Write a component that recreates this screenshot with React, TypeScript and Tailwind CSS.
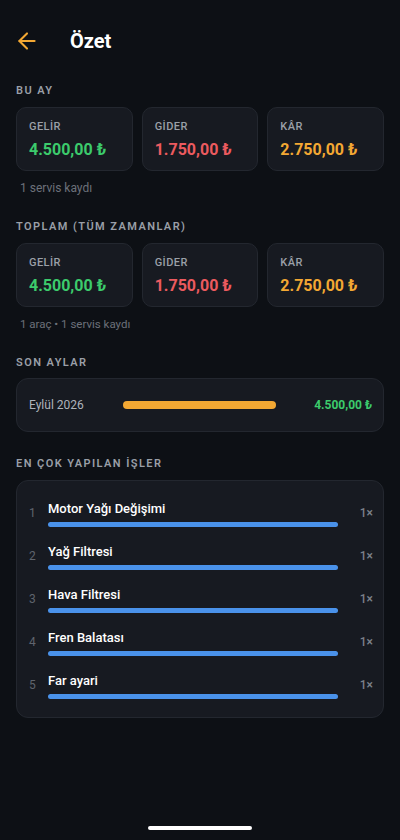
import { ArrowLeft } from 'lucide-react'

type Stat = { label: string; value: string; color: string }

const monthStats: Stat[] = [
  { label: 'GELİR', value: '4.500,00 ₺', color: 'text-[#3ccb6c]' },
  { label: 'GİDER', value: '1.750,00 ₺', color: 'text-[#ec5a5f]' },
  { label: 'KÂR', value: '2.750,00 ₺', color: 'text-[#f3a833]' },
]

const topJobs = ['Motor Yağı Değişimi', 'Yağ Filtresi', 'Hava Filtresi', 'Fren Balatası', 'Far ayari']

function SectionLabel({ children, className = '' }: { children: React.ReactNode; className?: string }) {
  return (
    <div className={`text-[11px] leading-4 font-semibold tracking-[0.13em] text-[#9a9fa7] ${className}`}>
      {children}
    </div>
  )
}

function StatRow({ stats }: { stats: Stat[] }) {
  return (
    <div className="grid grid-cols-3 gap-[9px]">
      {stats.map((s) => (
        <div key={s.label} className="h-16 rounded-[10px] bg-[#171a21] border border-[#23272f] px-3 pt-[11px]">
          <div className="text-[11px] leading-4 font-medium tracking-[0.04em] text-[#9ba0a8]">{s.label}</div>
          <div className={`mt-1 text-[16px] leading-[22px] font-bold ${s.color}`}>{s.value}</div>
        </div>
      ))}
    </div>
  )
}

export default function App() {
  return (
    <div className="h-[840px] w-[400px] bg-[#0d1015] flex flex-col font-['Roboto','Noto_Sans',sans-serif] overflow-hidden">
      <div className="flex-1 px-4">
        {/* header */}
        <div className="h-[58px] pt-6 flex items-center">
          <ArrowLeft className="w-[26px] h-[26px] text-[#f3a833] -ml-[2px]" strokeWidth={1.9} />
          <h1 className="ml-[30px] text-[20px] leading-[26px] font-bold text-white">Özet</h1>
        </div>

        <SectionLabel className="mt-[25px] mb-2">BU AY</SectionLabel>
        <StatRow stats={monthStats} />
        <div className="mt-[9px] pl-1 text-[12px] leading-4 text-[#6c717a]">1 servis kaydı</div>

        <SectionLabel className="mt-[23px] mb-2">TOPLAM (TÜM ZAMANLAR)</SectionLabel>
        <StatRow stats={monthStats} />
        <div className="mt-[9px] pl-1 text-[11.5px] leading-4 text-[#6c717a]">1 araç • 1 servis kaydı</div>

        <SectionLabel className="mt-[23px] mb-[7px]">SON AYLAR</SectionLabel>
        <div className="h-[54px] rounded-[12px] bg-[#171a21] border border-[#23272f] flex items-center pl-[12px] pr-[11px]">
          <div className="w-[94px] text-[12px] text-[#aeb3bb]">Eylül 2026</div>
          <div className="w-[153px] h-2 rounded-full bg-[#f3a833]" />
          <div className="flex-1 text-right text-[12px] font-bold text-[#3ccb6c]">4.500,00 ₺</div>
        </div>

        <SectionLabel className="mt-6 mb-2">EN ÇOK YAPILAN İŞLER</SectionLabel>
        <div className="rounded-[12px] bg-[#171a21] border border-[#23272f] pl-[12px] pr-[10px] pt-[18px] pb-[18px] flex flex-col gap-[15px]">
          {topJobs.map((job, i) => (
            <div key={job} className="flex items-center">
              <div className="w-[19px] text-[12px] text-[#5f646d]">{i + 1}</div>
              <div className="flex-1">
                <div className="text-[13px] leading-5 font-medium text-white">{job}</div>
                <div className="mt-[3px] h-[5px] rounded-full bg-[#4a92ea]" />
              </div>
              <div className="ml-[22px] text-[12px] font-medium text-[#7b8089]">1×</div>
            </div>
          ))}
        </div>
      </div>

      <div className="flex justify-center pb-[10px]">
        <div className="w-[104px] h-1 rounded-full bg-white" />
      </div>
    </div>
  )
}
